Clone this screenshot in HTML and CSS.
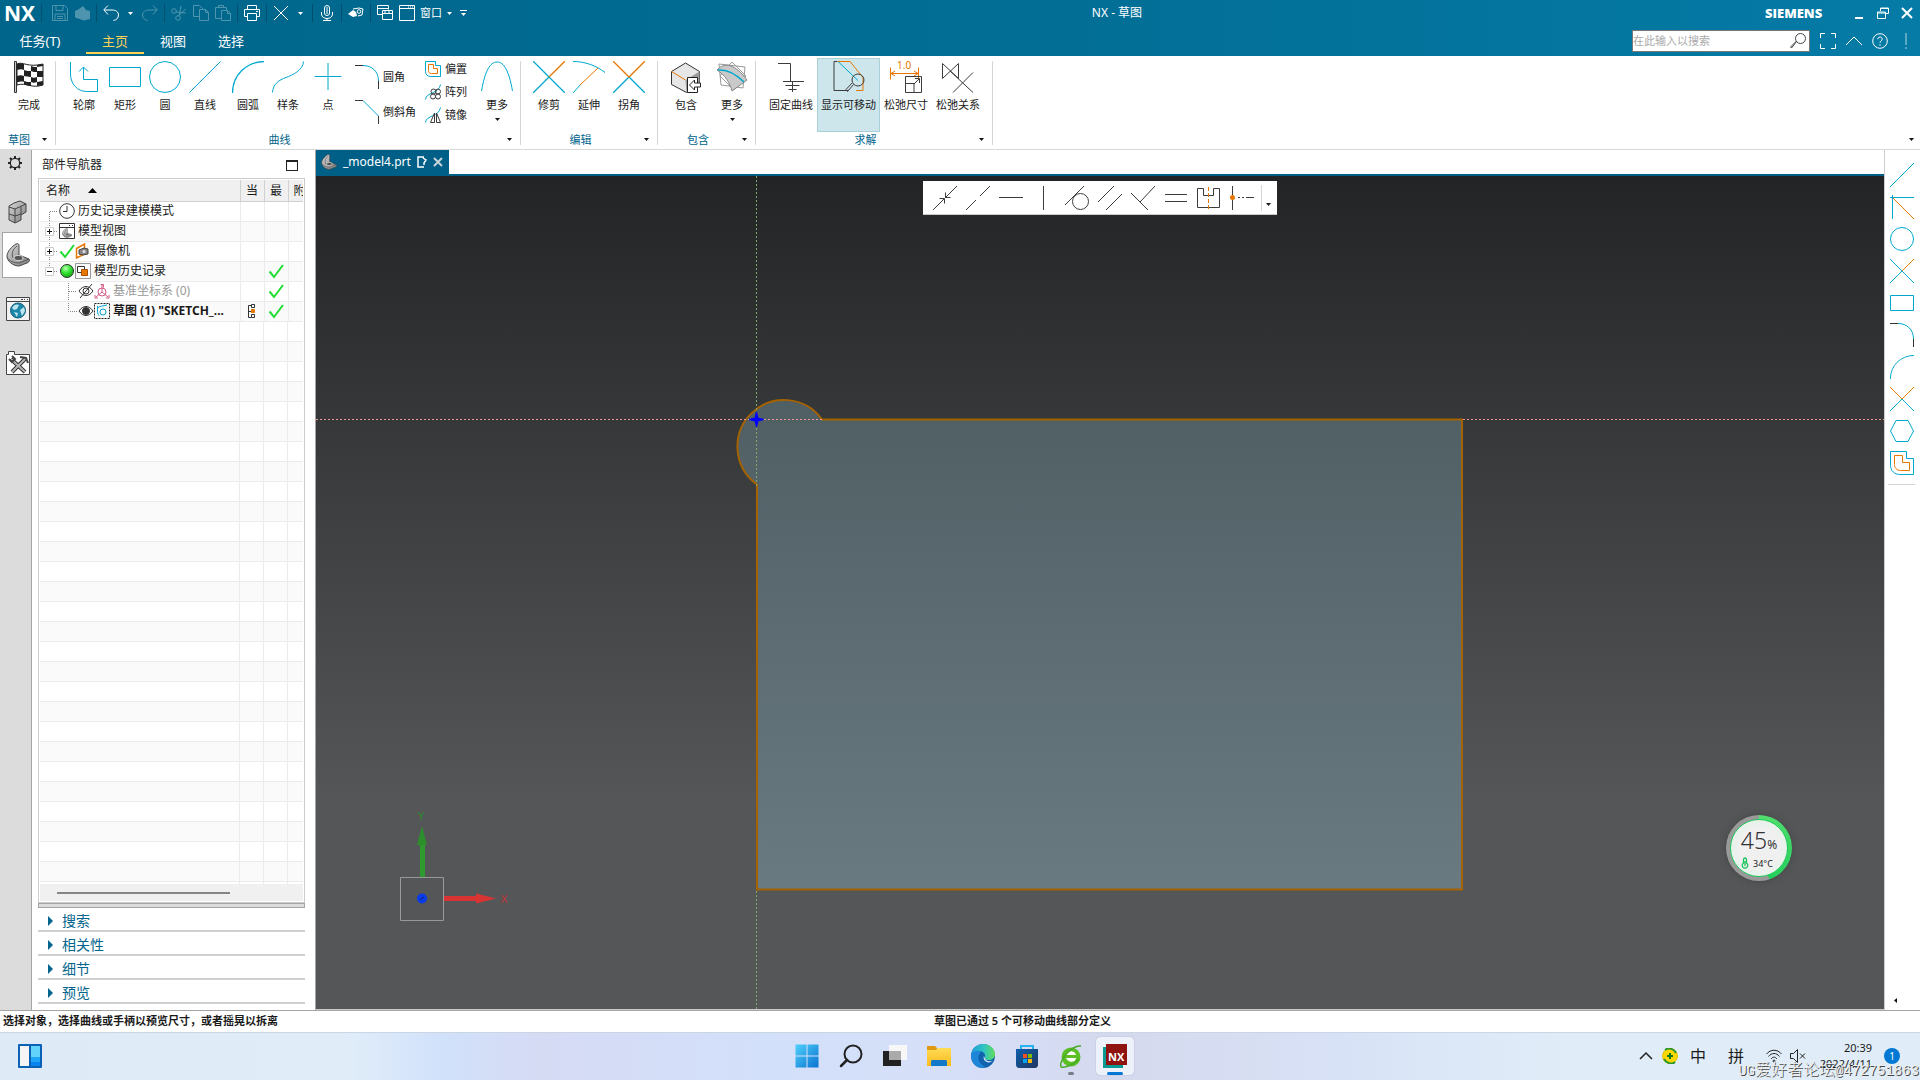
FILE: index.html
```html
<!DOCTYPE html>
<html lang="zh-CN">
<head>
<meta charset="utf-8">
<title>NX - 草图</title>
<link rel="stylesheet" href="styles.css">
</head>
<body>
<svg class="sprite" aria-hidden="true">
  <defs>
    <linearGradient id="metal" x1="0" y1="0" x2="1" y2="1"><stop offset="0" stop-color="#d8d8d8"/><stop offset="1" stop-color="#7c7c7c"/></linearGradient>
    <linearGradient id="face" x1="0" y1="0" x2="0" y2="1"><stop offset="0" stop-color="#505f64"/><stop offset="1" stop-color="#697a81"/></linearGradient>
    <radialGradient id="ball" cx=".4" cy=".3" r=".7"><stop offset="0" stop-color="#b8ffb0"/><stop offset=".5" stop-color="#35e635"/><stop offset="1" stop-color="#14a814"/></radialGradient>
    <linearGradient id="win" x1="0" y1="0" x2="1" y2="1"><stop offset="0" stop-color="#4fd0fb"/><stop offset="1" stop-color="#0a72d0"/></linearGradient>
    <linearGradient id="folder" x1="0" y1="0" x2="0" y2="1"><stop offset="0" stop-color="#ffdc55"/><stop offset="1" stop-color="#fbb91f"/></linearGradient>
    <linearGradient id="edge" x1="0" y1="0" x2="1" y2="0"><stop offset="0" stop-color="#1d9bdc"/><stop offset=".55" stop-color="#30c6c0"/><stop offset="1" stop-color="#62dc58"/></linearGradient>
    <linearGradient id="shop" x1="0" y1="0" x2="1" y2="1"><stop offset="0" stop-color="#0c5fae"/><stop offset="1" stop-color="#22365f"/></linearGradient>
  </defs>
  <symbol id="i-caret" viewBox="0 0 5 3"><path d="M0 0h5L2.500 3z" fill="currentColor"/></symbol>
  <symbol id="i-tick" viewBox="0 0 16 16"><path d="M1.500 8.500l4.500 5.500 9-12" fill="none" stroke="#1fdd32" stroke-width="2"/></symbol>
  <symbol id="i-part" viewBox="0 0 24 24"><path d="M1 13c0-4 5-10 9-12 2-1 3 0 3 2v9l10 4c1 2 0 3-2 4l-8 3c-5 0-12-4-12-10z" fill="url(#metal)" stroke="#4a4a4a"/><path d="M11 3c-4 3-6 7-4 12M1 14c2 4 7 6 12 6l10-4" fill="none" stroke="#5a5a5a"/><ellipse cx="12.500" cy="15" rx="4.500" ry="2.500" fill="#555" stroke="#ddd"/></symbol>
  <symbol id="i-offset" viewBox="0 0 24 24" fill="none"><path d="M.5.5h16v7h7v16h-14c-5 0-9-4-9-9z" stroke="#00a8d0"/><path d="M4.500 4.500h8v7h7v8h-9c-4 0-6-3-6-6z" stroke="#e87700"/></symbol>
  <symbol id="i-offset-s" viewBox="0 0 16 16" fill="none"><path d="M.5.5h10v4h5v11h-10c-3 0-5-2-5-5z" stroke="#00a8d0"/><path d="M3.500 3.500h5v4h4v5h-6c-2 0-3-1-3-3z" stroke="#e87700"/></symbol>
  <symbol id="i-trim" viewBox="0 0 32 32" fill="none" stroke="#00a8d0" stroke-width="1.300"><path d="M0 0l32 32M0 32l16-16"/><path d="M16 16L32 0" stroke="#e87700"/></symbol>
  <symbol id="i-corner" viewBox="0 0 32 32" fill="none" stroke="#00a8d0" stroke-width="1.300"><path d="M0 32l16-16 16 16"/><path d="M0 0l16 16L32 0" stroke="#e87700"/></symbol>
  <symbol id="i-arc" viewBox="0 0 32 32" fill="none" stroke="#00a8d0" stroke-width="1.300"><path d="M.5 32C.5 14 14 1 32 .5"/></symbol>
  <symbol id="i-fillet" viewBox="0 0 24 24" fill="none"><path d="M8 .5c9 0 15.500 6 15.500 15.500" stroke="#00a8d0"/><path d="M0 .5h8M23.500 16v8" stroke="#333"/></symbol>
</svg>

<div class="app">
  <header class="titlebar">
    <div class="title-row">
      <span class="logo">NX</span>
      <div class="quick">
        <i class="vsep"></i>
        <button class="qb dim" aria-label="保存"><svg viewBox="0 0 16 16"><path d="M.5.5h12l3 3v12H.5zM4 .5v5h7v-5M3 15.500V9h10v6.500M5 11.500h6M5 13.500h6"/></svg></button>
        <button class="qb dim" aria-label="零件"><svg viewBox="0 0 16 16"><path class="fill" d="M1 6l4-2 4-3 3 4 4 1v8l-6 1.500-9-3z"/></svg></button>
        <i class="vsep"></i>
        <button class="qb" aria-label="撤销"><svg viewBox="0 0 16 16"><path d="M5 .5L.8 4.800 5 9.500M1 5h8c4 0 6.500 2 6.500 5s-2 5-5 5.500"/></svg></button>
        <button class="drop" aria-label="撤销列表"><svg class="caret"><use href="#i-caret"/></svg></button>
        <button class="qb dim" aria-label="重做"><svg viewBox="0 0 16 16"><path d="M11 .5l4.200 4.300L11 9.500M15 5H7C3 5 .5 7 .5 10s2 5 5 5.500"/></svg></button>
        <i class="vsep"></i>
        <button class="qb dim" aria-label="剪切"><svg viewBox="0 0 16 16"><circle cx="3" cy="6" r="2.300"/><circle cx="7" cy="13" r="2.300"/><path d="M5 7l10 1M8 11L10 1M8.500 10l6-6"/></svg></button>
        <button class="qb dim" aria-label="复制"><svg viewBox="0 0 16 16"><path d="M6 11.500H.5V.5h6l3 3V5M6.500 4.500h6l3 3v8h-9zM12.500 4.500v3h3"/></svg></button>
        <button class="qb dim" aria-label="粘贴"><svg viewBox="0 0 16 16"><path d="M6 13.500H.5v-11h11V5M3.500 2.500v-2h5v2M6.500 5.500h6l3 3v7h-9zM12.500 5.500v3h3"/></svg></button>
        <i class="vsep"></i>
        <button class="qb" aria-label="打印"><svg viewBox="0 0 16 16"><path d="M3.500 4.500v-4h9v4M3 11.500H.5v-7h15v7H13M3.500 8.500h9v7h-9zM12 6.500h2"/></svg></button>
        <i class="vsep"></i>
        <button class="qb" aria-label="删除"><svg viewBox="0 0 16 16"><path d="M1 1l14 14M15 1L1 15"/></svg></button>
        <button class="drop" aria-label="删除列表"><svg class="caret"><use href="#i-caret"/></svg></button>
        <i class="vsep"></i>
        <button class="qb" aria-label="语音"><svg viewBox="0 0 16 16"><rect x="5.500" y=".5" width="5" height="10" rx="2.500"/><path d="M8 2v7M2.500 7v2c0 6 11 6 11 0V7M8 13v2.500M4 15.500h8"/></svg></button>
        <i class="vsep"></i>
        <button class="qb" aria-label="触控"><svg viewBox="0 0 16 16"><path class="fill" d="M0 9l5-4 3 2 1 4-4 1z"/><path d="M5 4l6-1 4 1-1 6-4 1"/><circle cx="11" cy="6.500" r="1.800"/></svg></button>
        <i class="vsep"></i>
        <button class="qb" aria-label="切换窗口"><svg viewBox="0 0 16 16"><path d="M5 9.500H.5V.5h11v4M.5 3.500h11M5.500 5.500h10v9h-10zM5.500 8.500h10M8 6v2M12 6v2"/></svg></button>
        <button class="win-btn"><svg viewBox="0 0 16 16"><path d="M.5.5h15v15H.5zM.5 3.500h15M9 2h1M11 2h1M13 2h1"/></svg>窗口<svg class="caret"><use href="#i-caret"/></svg></button>
        <button class="drop" aria-label="自定义"><svg class="more" viewBox="0 0 7 6"><path d="M0 .5h7"/><path class="fill" d="M1 3h5L3.500 6z"/></svg></button>
      </div>
      <h1 class="app-title">NX - 草图</h1>
      <span class="brand">SIEMENS</span>
      <div class="window-buttons">
        <button aria-label="最小化"><svg viewBox="0 0 12 12"><path d="M2 11h8" stroke-width="2"/></svg></button>
        <button aria-label="还原"><svg viewBox="0 0 12 12"><path d="M3.500 4V1h8v5.500H9M3.500 1.500h8M.5 5h8v6.500h-8zM.5 6h8"/></svg></button>
        <button aria-label="关闭"><svg viewBox="0 0 12 12"><path d="M1 1l10 10M11 1L1 11" stroke-width="2"/></svg></button>
      </div>
    </div>
    <div class="menu-row">
      <nav class="menu">
        <button class="file">任务(T)</button>
        <button class="on">主页</button>
        <button>视图</button>
        <button>选择</button>
      </nav>
      <form class="find">
        <input type="text" placeholder="在此输入以搜索" aria-label="搜索命令">
        <button type="button" aria-label="搜索"><svg viewBox="0 0 16 16"><circle cx="10.500" cy="5.500" r="5"/><path d="M6.500 8.500L1.500 15 .5 14l6-6z"/></svg></button>
      </form>
      <div class="help">
        <button aria-label="全屏"><svg viewBox="0 0 16 16"><path d="M.5 5V.5H5M11 .5h4.500V5M.5 11v4.500H5M11 15.500h4.500V11"/></svg></button>
        <button aria-label="折叠"><svg viewBox="0 0 16 16"><path d="M0 12l8-8 8 8"/></svg></button>
        <button aria-label="帮助"><svg viewBox="0 0 16 16"><circle cx="8" cy="8" r="7.300"/><path d="M5.800 6.200c0-3 4.500-2.800 4.400 0 0 1.600-2.200 1.600-2.200 3.600M8 11.200v1.500"/></svg></button>
        <button class="alert" aria-label="提示"><svg viewBox="0 0 16 16"><path d="M8 0v12M8 14v2" stroke-width="2"/></svg></button>
      </div>
    </div>
  </header>

  <div class="ribbon">
    <section class="group">
      <div class="tools start">
        <button class="tool"><svg viewBox="0 0 32 32"><path d="M1.500.5h2v31h-2z" fill="#ccc" stroke="#333"/><path d="M4 3c6-3 10 4 26 0v21c-12 4-16-3-26 0z" fill="#fff" stroke="#222"/><path d="M4 3c3-1 5-1 7 0v6c-2-1-4-1-7 0zM18 5c2 1 4 1 6 1v5c-2 0-4 0-6-1zM11 9c2 1 5 1 7 1v6c-3 0-5-1-7-1zM24 10h6v6h-6zM4 15c3-1 5-1 7 0v6c-2-1-4 0-7 0zM18 16c2 1 4 1 6 0v5c-2 1-4 1-6 0zM11 20c2 1 5 1 7 1v4c-3 0-5-1-7-2zM24 21l6-1v4l-6 1zM24 4l6-1v2l-6 1z" fill="#222"/></svg>完成</button>
      </div>
      <footer><span>草图</span><svg class="caret"><use href="#i-caret"/></svg></footer>
    </section>

    <section class="group">
      <div class="tools">
        <button class="tool"><svg viewBox="0 0 32 32" class="cy"><path d="M2.500 1v12c0 10 7 17.500 16 17.500h11v-12h-14V6M11 10.500L15.500 6l4.500 4.500"/></svg>轮廓</button>
        <button class="tool shift"><svg viewBox="0 0 32 32" class="cy"><path d="M.5 6.500h31v19H.5z"/></svg>矩形</button>
        <button class="tool"><svg viewBox="0 0 32 32" class="cy"><circle cx="16" cy="16" r="15.500"/></svg>圆</button>
        <button class="tool"><svg viewBox="0 0 32 32" class="cy"><path d="M.5 31.500l31-31"/></svg>直线</button>
        <button class="tool spaced"><svg viewBox="0 0 32 32"><use href="#i-arc"/></svg>圆弧</button>
        <button class="tool"><svg viewBox="0 0 32 32" class="cy"><path d="M.5 31.500C1 23 7 19 14 16.500S31 9 31.500.5"/></svg>样条</button>
        <button class="tool"><svg viewBox="0 0 32 32" class="cy"><path d="M2.500 15.500h27M16 2v27"/></svg>点</button>
        <div class="stack two">
          <button><svg viewBox="0 0 24 24"><use href="#i-fillet"/></svg>圆角</button>
          <button><svg viewBox="0 0 24 24" class="cy"><path d="M8 .5L23.500 16"/><path class="dk" d="M0 .5h8M23.500 16v8"/></svg>倒斜角</button>
        </div>
        <div class="stack three">
          <button><svg viewBox="0 0 16 16"><use href="#i-offset-s"/></svg>偏置</button>
          <button><svg viewBox="0 0 16 16" class="cy"><path d="M.5 15.500C1 8 14 10 15.500.5"/><g class="dk"><circle cx="8.500" cy="7.500" r="2.500"/><circle cx="13" cy="7.500" r="2.500"/><circle cx="8" cy="12.500" r="2.500"/><circle cx="13" cy="12.500" r="2.500"/></g></svg>阵列</button>
          <button><svg viewBox="0 0 16 16" class="cy"><path d="M.5 15.500C1 8 14 10 15.500.5"/><path class="dk" d="M9.500 6v9.500h-4zM11.500 6v9.500h4z"/></svg>镜像</button>
        </div>
        <button class="tool"><svg viewBox="0 0 32 32" class="cy"><path d="M.5 30C4 10 9 1 16 1s12 9 15.500 29"/></svg>更多<svg class="caret"><use href="#i-caret"/></svg></button>
      </div>
      <footer><span>曲线</span><svg class="caret"><use href="#i-caret"/></svg></footer>
    </section>

    <section class="group edit">
      <div class="tools">
        <button class="tool"><svg viewBox="0 0 32 32"><use href="#i-trim"/></svg>修剪</button>
        <button class="tool"><svg viewBox="0 0 32 32" class="cy"><path d="M0 .5c12 0 23 4 32 11M0 32l8-9"/><path class="or" d="M7 24L25 7"/></svg>延伸</button>
        <button class="tool"><svg viewBox="0 0 32 32"><use href="#i-corner"/></svg>拐角</button>
      </div>
      <footer><span>编辑</span><svg class="caret"><use href="#i-caret"/></svg></footer>
    </section>

    <section class="group include">
      <div class="tools">
        <button class="tool"><svg viewBox="0 0 32 32"><path d="M1.500 10.500l14-8.500 14 8.500v13l-13 8-15-8z" fill="#e6e6e6" stroke="#333"/><path d="M15.500 19l14-8.500v13l-13 8z" fill="#9b9b9b"/><path d="M1.500 10.500l14 8.500" stroke="#e87700"/><path d="M17.500 16.500h10v15h-10z" fill="#fff" stroke="#222"/><path d="M19.500 24l5-5v3h6v4h-6v3z" fill="#fff" stroke="#222"/></svg>包含</button>
        <button class="tool"><svg viewBox="0 0 32 32"><path d="M3 3l26 3-2 21L5 24z" fill="none" stroke="#999"/><path d="M16 1l14 14-12 14L4 15z" fill="none" stroke="#999"/><path d="M1 9C9 0 20 4 31 19L16 30C14 22 9 14 1 9z" fill="#c9c9c9" stroke="#888"/><path d="M2 9c10-1 18 4 26 12" fill="none" stroke="#00a8d0" stroke-width="1.500"/></svg>更多<svg class="caret"><use href="#i-caret"/></svg></button>
      </div>
      <footer><span>包含</span><svg class="caret"><use href="#i-caret"/></svg></footer>
    </section>

    <section class="group solve">
      <div class="tools">
        <button class="tool wide"><svg viewBox="0 0 32 32" class="gy"><path d="M3 2.500h12.500v18M8 20.500h21M10.500 24.500h14M13.500 28.500h8M17.500 20v11"/></svg>固定曲线</button>
        <button class="tool wide pressed"><svg viewBox="0 0 32 32" class="gy"><path d="M4.500.5H1v29h15"/><path class="cy" d="M5 .5l20 19"/><path class="or" d="M5 .5h12l13 16v13h-7"/><circle cx="25" cy="19" r="6"/><path d="M20.500 23.500l-6 7-1.500-2 6-6.500"/></svg>显示可移动</button>
        <button class="tool wide"><svg viewBox="0 0 32 32" class="gy"><path class="or" d="M.5 6.500v12M28.500 6.500v12M1 12.500h27M5 10l-4 2.500L5 15M24 10l4 2.500-4 2.500"/><text x="7" y="8">1.0</text><path d="M15.500 15.500h16v16h-16zM15.500 22.500h8.500v9M24 23l5-5M25 17.500h4.500V22"/></svg>松弛尺寸</button>
        <button class="tool wide"><svg viewBox="0 0 32 32" class="gy"><path d="M.5 17.500v-15l16 15v-15zM11 31.500l20-20M8 10l23 21.500"/></svg>松弛关系</button>
      </div>
      <footer><span>求解</span><svg class="caret"><use href="#i-caret"/></svg></footer>
    </section>
    <button class="ribbon-end" aria-label="功能区选项"><svg class="caret"><use href="#i-caret"/></svg></button>
  </div>

  <main class="work">
    <nav class="rail">
      <button class="gear" aria-label="设置"><svg viewBox="0 0 16 16"><circle cx="8" cy="8" r="4.700" fill="none" stroke="#222" stroke-width="1.300"/><path d="M8 1v2M8 13v2M1 8h2M13 8h2M3 3l1.500 1.500M11.500 11.500L13 13M13 3l-1.500 1.500M3 13l1.500-1.500" stroke="#222" stroke-width="2"/></svg></button>
      <button aria-label="装配导航器"><svg viewBox="0 0 24 24"><path d="M4 6l5-3 6-2 6 3v8l-5 3v5l-6 3-6-3z" fill="url(#metal)" stroke="#444"/><path d="M4 7l6 2 11-5M10 9v14M4 14l6 2 6-2M16 7v7" fill="none" stroke="#444"/></svg></button>
      <button class="current" aria-label="部件导航器"><svg viewBox="0 0 24 24"><use href="#i-part"/></svg></button>
      <button aria-label="浏览器"><svg viewBox="0 0 24 24"><path d="M.5.5h23v23H.5z" fill="#f2f2f2" stroke="#444"/><path d="M.5 4.500h23M15 2.500h2M18 2.500h1M21 2.500h1" stroke="#444"/><circle cx="12" cy="13.500" r="7.500" fill="#1c87a8" stroke="#145f78"/><path d="M6 11c2-4 5-4 7-3l-2 4-3 1zM14 13l4-3 1 4-3 5zM8 15l4 1-1 4z" fill="#bfe5ef"/></svg></button>
      <button aria-label="工具"><svg viewBox="0 0 24 24"><path d="M.5 3.500h2v-3h6v3h15v20H.5z" fill="#fff" stroke="#444"/><path d="M5 8l14 13M19 8L6 21" stroke="#333" stroke-width="4"/><path d="M5 8l14 13M19 8L6 21" stroke="#b5b5b5" stroke-width="2"/><path d="M3 8l3 3 3-3-3-3M14 6l6 1 2 5" fill="none" stroke="#444" stroke-width="2"/></svg></button>
    </nav>

    <aside class="navigator">
      <header><h2>部件导航器</h2><button aria-label="最大化面板"></button></header>
      <div class="tree">
        <table>
          <colgroup><col class="c-name"><col class="c-flag"><col class="c-flag"><col></colgroup>
          <thead><tr><th class="name">名称<svg class="sort" viewBox="0 0 9 5"><path d="M0 5h9L4.500 0z"/></svg></th><th>当</th><th>最</th><th>附</th></tr></thead>
          <tbody>
            <tr><td><div class="node"><svg class="ln" viewBox="0 0 19 20"><path d="M9.500 20V10.500H18"/></svg><svg viewBox="0 0 16 16"><circle cx="8" cy="8" r="7.300" fill="#fff" stroke="#333"/><path d="M8 3v5.500H4" fill="none" stroke="#333"/></svg><span>历史记录建模模式</span></div></td><td></td><td></td><td></td></tr>
            <tr><td><div class="node"><svg class="ln" viewBox="0 0 19 20"><path d="M9.500 0v20M14 10.500h4"/><path class="box" d="M5.500 6.500h8v8h-8z"/><path class="sign" d="M7 10.500h5M9.500 8v5"/></svg><svg viewBox="0 0 16 16"><path d="M.5.500h15v15H.5zM.5 4.500h15M10 2.500h1M13 2.500h1" fill="#fff" stroke="#333"/><use href="#i-part" x="3" y="5" width="10" height="10"/></svg><span>模型视图</span></div></td><td></td><td></td><td></td></tr>
            <tr><td><div class="node"><svg class="ln" viewBox="0 0 19 20"><path d="M9.500 0v20M14 10.500h4"/><path class="box" d="M5.500 6.500h8v8h-8z"/><path class="sign" d="M7 10.500h5M9.500 8v5"/></svg><svg><use href="#i-tick"/></svg><svg viewBox="0 0 16 16"><path d="M1.500 5.500l8-4.500v10l-8 4z" fill="#fff" stroke="#e87700" stroke-width="1.500"/><path d="M4 7l5-2 4 1v5l-5 1-4-1z" fill="#888" stroke="#444"/><circle cx="9" cy="8.500" r="1.500" fill="#ddd"/></svg><span>摄像机</span></div></td><td></td><td></td><td></td></tr>
            <tr><td><div class="node"><svg class="ln" viewBox="0 0 19 20"><path d="M9.500 0v6M14 10.500h4"/><path class="box" d="M5.500 6.500h8v8h-8z"/><path class="sign" d="M7 10.500h5"/></svg><svg viewBox="0 0 16 16"><circle cx="8" cy="8" r="6.500" fill="url(#ball)" stroke="#333"/></svg><svg viewBox="0 0 16 16"><path d="M.5.500h15v15H.5z" fill="none" stroke="#999"/><path d="M2.500 3.500h7v6h-7z" fill="#fff" stroke="#333"/><path d="M6.500 6.500h6v6h-6z" fill="#e87700" stroke="#a85000"/></svg><span>模型历史记录</span></div></td><td></td><td><svg class="ok"><use href="#i-tick"/></svg></td><td></td></tr>
            <tr><td><div class="node muted"><svg class="ln deep" viewBox="0 0 38 20"><path d="M28.500 0v20M29 10.500h8"/></svg><svg viewBox="0 0 16 16" fill="none" stroke="#333"><path d="M1 8c4-6 10-6 14 0-4 6-10 6-14 0zM2 15L14 1"/><circle cx="8" cy="8" r="3"/></svg><svg viewBox="0 0 16 16" fill="none" stroke="#d25a86"><path d="M8 2v7l-6 5M8 9l6 5"/><circle cx="8" cy="9" r="4"/><path d="M6.500 1.500h3v3M1 12v3h3M15 12v3h-3"/></svg><span>基准坐标系 (0)</span></div></td><td></td><td><svg class="ok"><use href="#i-tick"/></svg></td><td></td></tr>
            <tr><td><div class="node strong"><svg class="ln deep" viewBox="0 0 38 20"><path d="M28.500 0v10.500H37"/></svg><svg viewBox="0 0 16 16" fill="none" stroke="#333"><path d="M1 8c4-6 10-6 14 0-4 6-10 6-14 0z"/><circle cx="8" cy="8" r="3.500" fill="#333"/></svg><svg viewBox="0 0 16 16" fill="none" stroke="#00a8d0"><path d="M.5.500h15v15H.5z" stroke="#222" stroke-dasharray="2 1"/><path d="M3.500 3v5c0 3 1 4 2 5M3 5c3-2 6-2 10-3"/><circle cx="9" cy="9" r="3"/></svg><span>草图 (1) "SKETCH_...</span></div></td><td><svg class="ok" viewBox="0 0 16 16" fill="none" stroke="#333"><path d="M7 2.500H4.500v12H7M4.500 8.500H7M7.500 1.500h3v3h-3zM7.500 11.500h3v3h-3z"/><path d="M7.500 6.500h3v3h-3z" fill="#e87700" stroke="#e87700"/></svg></td><td><svg class="ok"><use href="#i-tick"/></svg></td><td></td></tr>
          </tbody>
        </table>
        <div class="rows-fill"><i class="c-name"></i><i class="c-flag"></i><i class="c-flag"></i></div>
        <div class="hscroll"><i></i></div>
      </div>
      <div class="splitter"></div>
      <div class="sections">
        <button>搜索</button>
        <button>相关性</button>
        <button>细节</button>
        <button>预览</button>
      </div>
    </aside>

    <section class="view">
      <div class="tabs">
        <div class="tab"><svg class="t-part"><use href="#i-part"/></svg><span>_model4.prt</span>
          <svg class="t-edit" viewBox="0 0 10 12"><path d="M7 1H1v10h6M7 9V7l2-3-3-2" fill="none" stroke="#fff" stroke-width="1.500"/></svg>
          <button aria-label="关闭标签"><svg viewBox="0 0 10 10"><path d="M1 1l8 8M9 1L1 9" stroke="#c5d3da" stroke-width="2"/></svg></button></div>
      </div>
      <div class="canvas">
        <svg class="sketch" aria-label="草图">
          <path d="M441 308.500V713.500H1146V243.500H506A46.600 46.600 0 1 0 441 308.500z" fill="url(#face)" stroke="#a46300" stroke-width="2"/>
          <path d="M440.500 220v90" stroke="#7fa86a" stroke-dasharray="2 2"/>
          <line x1="0" y1="243.500" x2="506" y2="243.500" stroke="#f09a8e" stroke-dasharray="2 2"/>
          <line x1="1147" y1="243.500" x2="100%" y2="243.500" stroke="#f09a8e" stroke-dasharray="2 2"/>
          <line x1="440.500" y1="0" x2="440.500" y2="220" stroke="#7fa86a" stroke-dasharray="2 2"/>
          <line x1="440.500" y1="715" x2="440.500" y2="100%" stroke="#7fa86a" stroke-dasharray="2 2"/>
          <path d="M440.500 236l1.500 6 6 1.500-6 1.500-1.500 6-1.500-6-6-1.500 6-1.500z" fill="#00f" stroke="#00f"/>
          <g>
            <path d="M84.500 701.500h43v43h-43z" fill="none" stroke="#999"/>
            <path d="M104 669h5v32h-5z" fill="#2f9a2f"/><path d="M101 669h10l-5-19z" fill="#2c8f2c"/>
            <path d="M128 720h33v5h-33z" fill="#d83434"/><path d="M160 717.500v10l20-5z" fill="#d83434"/>
            <circle cx="106" cy="722.500" r="5" fill="#0a3bea"/><path d="M104 724l4-3" stroke="#061c6e"/>
            <text x="102" y="644" fill="#2c8a2c">Y</text><text x="185" y="727" fill="#c83232">X</text>
          </g>
        </svg>
        <div class="constraints">
          <button aria-label="重合"><svg viewBox="0 0 24 24"><path d="M0 24l11-11M24 0L12 12M6.500 12.500h5v5M17.500 11.500h-5v-5"/></svg></button>
          <button aria-label="共线"><svg viewBox="0 0 24 24"><path d="M0 24l10-10M14 10L24 0"/></svg></button>
          <button aria-label="水平"><svg viewBox="0 0 24 24"><path d="M0 11.500h24"/></svg></button>
          <button aria-label="竖直"><svg viewBox="0 0 24 24"><path d="M11.500 0v24"/></svg></button>
          <button aria-label="相切"><svg viewBox="0 0 24 24"><circle cx="15.500" cy="15.500" r="8"/><path d="M0 19L19 0"/></svg></button>
          <button aria-label="平行"><svg viewBox="0 0 24 24"><path d="M0 16L16 0M8 24L24 8"/></svg></button>
          <button aria-label="垂直"><svg viewBox="0 0 24 24"><path d="M0 7l17 17M9 16L24 0"/></svg></button>
          <button aria-label="等长"><svg viewBox="0 0 24 24"><path d="M1 8.500h22M1 15.500h22"/></svg></button>
          <button aria-label="对称"><svg viewBox="0 0 24 24"><path d="M.5 2.500h6v7h10v-7h6v19H.5z"/><path class="or" d="M11.500 1v23" stroke-dasharray="4 2"/></svg></button>
          <button aria-label="中点对齐"><svg viewBox="0 0 24 24"><path d="M2.500 0v24M8 11.500h2M12 11.500h2M16 11.500h8"/><circle cx="2.500" cy="11.500" r="2.500" fill="#e87700" stroke="none"/></svg></button>
          <i></i>
          <button class="opt" aria-label="更多约束"><svg class="caret"><use href="#i-caret"/></svg></button>
        </div>
        <div class="gauge"><div class="dial">
          <p class="load">45<small>%</small></p>
          <p class="temp"><svg viewBox="0 0 8 12"><path d="M2.500 6V2.500a1.500 1.500 0 0 1 3 0V6a2.800 2.800 0 1 1-3 0zM4 4v5" fill="none" stroke="#19c35a" stroke-width="1.300"/></svg>34°C</p>
        </div></div>
      </div>
    </section>

    <aside class="side-tools">
      <button aria-label="直线"><svg viewBox="0 0 24 24" class="cy"><path d="M0 24L24 0"/></svg></button>
      <button aria-label="拐角线"><svg viewBox="0 0 24 24" class="cy"><path d="M0 2.500h24M2.500 0v24"/><path class="or" d="M3 3l21 21"/></svg></button>
      <button aria-label="圆"><svg viewBox="0 0 24 24" class="cy"><circle cx="12" cy="12" r="11.500"/></svg></button>
      <button aria-label="修剪"><svg><use href="#i-trim"/></svg></button>
      <button aria-label="矩形"><svg viewBox="0 0 24 24" class="cy"><path d="M.5 4.500h23v15H.5z"/></svg></button>
      <button aria-label="圆角"><svg><use href="#i-fillet"/></svg></button>
      <button aria-label="圆弧"><svg><use href="#i-arc"/></svg></button>
      <button aria-label="制作拐角"><svg><use href="#i-corner"/></svg></button>
      <button aria-label="多边形"><svg viewBox="0 0 24 24" class="cy"><path d="M6 1.500h12L23.500 12 18 22.500H6L.5 12z"/></svg></button>
      <button aria-label="偏置"><svg><use href="#i-offset"/></svg></button>
      <hr>
      <button class="fold" aria-label="展开"><svg viewBox="0 0 3 5"><path d="M3 0v5L0 2.500z" fill="#111"/></svg></button>
    </aside>
  </main>

  <footer class="status"><span class="cue">选择对象，选择曲线或手柄以预览尺寸，或者摇晃以拆离</span><span class="state">草图已通过 5 个可移动曲线部分定义</span></footer>

  <div class="taskbar">
    <div class="tb-left"><button aria-label="小组件"><svg viewBox="0 0 24 24"><rect width="24" height="24" rx="1" fill="#0b62b5"/><path d="M2 2h9v20H2z" fill="#f5f5f5"/><path d="M13 2h9v11h-9z" fill="#62d4fb"/><path d="M13 13h9v5h-9z" fill="#1fa5f5"/><path d="M13 18h9v4h-9z" fill="#0a84ec"/></svg></button></div>
    <div class="tb-apps">
      <button aria-label="开始"><svg viewBox="0 0 24 24"><path d="M.5.500h11v11H.5zM12.500.500h11v11h-11zM.5 12.500h11v11H.5zM12.500 12.500h11v11h-11z" fill="url(#win)"/></svg></button>
      <button aria-label="搜索"><svg viewBox="0 0 24 24"><circle cx="14" cy="10" r="8.500" fill="none" stroke="#222" stroke-width="2"/><path d="M8 16l-6 6" stroke="#222" stroke-width="2.500" stroke-linecap="round"/></svg></button>
      <button aria-label="任务视图"><svg viewBox="0 0 24 24"><path d="M6 1h18v15H6z" fill="#f7f7f7"/><path d="M0 7h18v15H0z" fill="#222"/><path d="M6 7h12v9H6z" fill="#aaa"/></svg></button>
      <button aria-label="文件资源管理器"><svg viewBox="0 0 24 24"><path d="M0 3c0-1 0-1 1-1h7l2 2v4H0z" fill="#e09a12"/><path d="M0 6h9l2-2h13v18H0z" fill="url(#folder)"/><path d="M4 22v-4c0-2 1-2 2-2h12c1 0 2 0 2 2v4z" fill="#1279c9"/></svg></button>
      <button aria-label="Edge"><svg viewBox="0 0 24 24"><circle cx="12" cy="12" r="12" fill="#1263ad"/><path d="M0 11C1 4 6 0 12 0c7 0 12 5 12 10 0 4-3 6-6 6-4 0-5-1-4-3 1-3-2-6-6-6-4 0-7 2-8 4z" fill="url(#edge)"/><path d="M0 11c3-5 8-5 10-3-4 3-3 9 0 12l4 3c-8 3-14-4-14-12z" fill="#1e86d8"/><path d="M13 12c1 5 5 6 9 5-2 1-4 2-6 1-3-1-4-4-3-6z" fill="#dce3f5"/></svg></button>
      <button aria-label="应用商店"><svg viewBox="0 0 24 24"><path d="M6 6V2h12v4" fill="none" stroke="#27b3f0" stroke-width="2"/><path d="M1 5h22v15c0 3-1 4-4 4H5c-3 0-4-1-4-4z" fill="url(#shop)"/><path d="M8 10h4v4H8z" fill="#f25022"/><path d="M13 10h4v4h-4z" fill="#7fba00"/><path d="M8 15h4v4H8z" fill="#00a4ef"/><path d="M13 15h4v4h-4z" fill="#ffb900"/></svg></button>
      <button class="running" aria-label="浏览器"><svg viewBox="0 0 24 24"><circle cx="12" cy="13" r="9.500" fill="#5cc024"/><path d="M7 11c1-5 9-5 10 0zM7 14h10c0 4-7 6-10 0z" fill="#fff"/><path d="M2 23C0 17 12 1 22 2M2 23c4 1 14-3 18-8" fill="none" stroke="#49a82a" stroke-width="1.500"/></svg></button>
      <button class="active" aria-label="NX"><svg viewBox="0 0 24 24"><path d="M0 3h20v21H0z" fill="#0a9a94"/><path d="M3 0h21v21H3z" fill="#8f140f"/><text x="5" y="17">NX</text></svg></button>
    </div>
    <div class="tray">
      <button aria-label="显示隐藏图标"><svg viewBox="0 0 16 16"><path d="M2 11l6-6 6 6" stroke-width="1.500"/></svg></button>
      <button aria-label="安全"><svg viewBox="0 0 16 16"><circle cx="8" cy="8" r="7.500" fill="#ffd800" stroke="#e2c000"/><path d="M3 2c4-3 9-1 11 3M2 11c2 4 8 6 11 3" stroke="#2d962d" stroke-width="2"/><path d="M8 5v6M5 8h6" stroke="#137a1c" stroke-width="2"/></svg></button>
      <button class="ime">中</button>
      <button class="ime pin">拼</button>
      <button aria-label="网络"><svg viewBox="0 0 16 16"><path d="M.5 6c4-5 11-5 15 0M2.500 8.500c3-4 8-4 11 0M5 11c2-2.500 4-2.500 6 0"/><circle cx="8" cy="13" r="1"/></svg></button>
      <button aria-label="静音"><svg viewBox="0 0 16 16"><path d="M.5 5.500h3l4-4v13l-4-4h-3zM10 5.500l5 5M15 5.500l-5 5"/></svg></button>
      <time><span>20:39</span><span>2022/4/11</span></time>
      <button class="badge">1</button>
    </div>
    <p class="mark"><b>UG</b>爱好者论坛<b>@472751863</b></p>
  </div>
</div>
</body>
</html>
```
FILE: styles.css
```css
* { box-sizing: border-box; }
body {
  margin: 0;
  font-family: "Noto Sans", "Noto Sans CJK SC", sans-serif;
  font-size: 12px;
  line-height: 16px;
  color: #1a1a1a;
  background: #fff;
}
button {
  display: flex;
  align-items: center;
  margin: 0;
  padding: 0;
  border: 0;
  background: none;
  color: inherit;
  font: inherit;
  white-space: nowrap;
}
svg { display: block; flex: none; }
h1, h2, p { margin: 0; font-size: 12px; font-weight: 400; }
.sprite { position: absolute; width: 0; height: 0; }
.caret { width: 5px; height: 3px; }
.cy { fill: none; stroke: #00a8d0; }
.gy { fill: none; stroke: #3c3c3c; }
.dk { stroke: #3c3c3c; }
.or { stroke: #e87700; }

.app { display: flex; flex-direction: column; min-height: 100vh; }

/* Title bar */
.titlebar {
  height: 56px;
  color: #fff;
  background: linear-gradient(90deg, #00658a, #026e96 55%, #057ba6);
}
.titlebar svg { fill: none; stroke: #fff; }
.titlebar .fill { fill: #fff; stroke: none; }
.title-row { display: flex; align-items: center; height: 26px; padding: 0 7px 0 4px; }
.logo { width: 37px; font: 700 21px/26px "Noto Sans", sans-serif; }
.quick { display: flex; align-items: center; gap: 6px; }
.vsep { width: 1px; height: 18px; background: #004f6e; }
.vsep:first-child { margin-right: 4px; }
.qb svg, .win-btn svg:first-child { width: 16px; height: 16px; }
.dim { opacity: .3; }
.drop { width: 11px; justify-content: center; }
.titlebar .caret { fill: #fff; stroke: none; }
.win-btn { gap: 5px; font-size: 11px; }
.more { width: 7px; height: 6px; }
.app-title { flex: 1; text-align: center; }
.brand { width: 88px; font: 800 13px/16px "Open Sans", sans-serif; }
.window-buttons { display: flex; gap: 12px; }
.window-buttons svg { width: 12px; height: 12px; }
.menu-row { display: flex; align-items: center; height: 30px; padding-right: 6px; }
.menu { display: flex; flex: 1; height: 28px; margin-bottom: 2px; font-size: 13px; }
.menu button { width: 58px; padding-top: 3px; justify-content: center; border-bottom: 2px solid transparent; }
.menu .file { width: 86px; padding-right: 6px; }
.menu .on { color: #ffd257; border-color: #ffcf4d; }
.find {
  display: flex;
  align-items: center;
  width: 178px;
  height: 22px;
  padding-right: 3px;
  border: 1px solid #777;
  background: #fff;
}
.find input { flex: 1; min-width: 0; padding: 0; border: 0; outline: 0; font: 11px/16px "Noto Sans", "Noto Sans CJK SC", sans-serif; }
.find input::placeholder { color: #aaa; }
.find svg { width: 16px; height: 16px; stroke: #444; }
.help { display: flex; gap: 10px; padding-left: 10px; }
.help svg { width: 16px; height: 16px; }
.help .alert { opacity: .35; }

/* Ribbon */
.ribbon { display: flex; height: 94px; border-bottom: 1px solid #d9d9d9; font-size: 11px; }
.group { display: flex; flex-direction: column; padding: 2px 0; position: relative; }
.group::after { content: ""; position: absolute; right: 0; top: 5px; bottom: 4px; width: 1px; background: #d5d5d5; }
.tools { display: flex; flex: 1; padding: 0 4px 0 8px; }
.tools.start { padding: 0 7px 0 9px; }
.edit .tools { padding-right: 9px; }
.solve .tools { padding: 0 9px; }
.include .tools { gap: 6px; }
.tool { flex-direction: column; width: 40px; height: 74px; padding-top: 2px; border: 1px solid transparent; line-height: 14px; }
.tool > svg:first-child { width: 32px; height: 32px; margin-bottom: 5px; overflow: visible; }
.tool .caret { margin-top: 6px; }
.tool text { font: 10px "Noto Sans", sans-serif; fill: #e87700; stroke: none; }
.tool.shift { margin-left: 1px; }
.tool.spaced { margin-left: 3px; }
.tool.wide { width: auto; padding: 2px 3px 0; }
.tool.pressed { background: #cde6eb; border-color: #a8d0d9; }
.stack { display: flex; flex-direction: column; }
.stack button { gap: 4px; }
.two { gap: 11px; padding: 7px 9px 0 7px; }
.two svg { width: 24px; height: 24px; }
.three { gap: 7px; padding: 3px 10px 0 0; }
.three svg { width: 16px; height: 16px; }
.group footer { display: flex; align-items: center; height: 15px; padding-right: 9px; color: #00648c; }
.group footer span { flex: 1; padding-right: 4px; text-align: center; line-height: 14px; }
.group footer .caret, .ribbon-end { color: #111; }
.ribbon-end { align-self: flex-end; margin: 0 6px 8px auto; }

/* Work area */
.work { display: flex; flex: 1; }
.rail { display: flex; flex-direction: column; width: 32px; background: #dcdcdc; border-right: 1px solid #a5a5a5; }
.rail button { justify-content: center; height: 46px; padding-left: 4px; margin-bottom: 8px; }
.rail .gear { height: 26px; margin-bottom: 13px; padding: 0 2px 0 0; }
.rail svg { width: 24px; height: 24px; }
.rail .gear svg { width: 16px; height: 16px; }
.rail button:nth-child(2) { padding-left: 2px; margin-bottom: -3px; }
.rail .current { margin: 0 -1px 8px 2px; padding: 0; background: #fff; border: 1px solid #a5a5a5; border-right: 0; }
.navigator { display: flex; flex-direction: column; width: 284px; padding: 0 10px 6px 6px; border-right: 1px solid #a5a5a5; }
.navigator header { display: flex; align-items: center; justify-content: space-between; height: 28px; padding: 2px 7px 0 4px; }
.navigator header button { width: 12px; height: 11px; border: 1px solid #222; border-top-width: 2px; }
.tree { display: flex; flex: 1; flex-direction: column; padding: 1px; border: 1px solid #ccc; overflow: hidden; }
.tree table { width: 100%; table-layout: fixed; border-collapse: collapse; }
.c-name { width: 200px; }
.c-flag { width: 24px; }
.tree th { height: 21px; padding: 2px 0 0; background: #f0f0f0; border: solid #d0d0d0; border-width: 0 1px 1px 0; font-weight: 400; line-height: 16px; overflow: hidden; }
.tree th.name { padding-left: 6px; text-align: left; }
.tree th:last-child { padding-left: 5px; border-right: 0; }
.sort { display: inline-block; width: 9px; height: 5px; margin: 0 0 2px 18px; }
.tree td { height: 20px; padding: 0; border: solid #ebebeb; border-width: 0 1px 1px 0; overflow: hidden; }
.tree td:last-child { border-right: 0; }
.tree tbody tr:nth-child(even) { background: #fafafa; }
.node { display: flex; align-items: center; height: 19px; }
.node svg { width: 16px; height: 16px; }
.node .ln { width: 19px; height: 20px; fill: none; stroke: #888; stroke-dasharray: 1 1; }
.node .deep { width: 38px; }
.ln .box { fill: #fff; stroke: #ccc; stroke-dasharray: none; }
.ln .sign { stroke: #111; stroke-dasharray: none; }
.node span { padding-left: 3px; white-space: nowrap; }
.muted span { color: #999; }
.strong span { font-weight: 700; }
.ok { width: 16px; height: 16px; margin: 0 auto; }
.rows-fill {
  display: flex;
  flex: 1;
  background: repeating-linear-gradient(#fff 0 19px, #ebebeb 19px 20px, #fafafa 20px 39px, #ebebeb 39px 40px);
}
.rows-fill i { border-right: 1px solid #ebebeb; }
.hscroll { display: flex; align-items: center; height: 17px; padding-left: 17px; background: #f0f0f0; }
.hscroll i { width: 173px; height: 2px; background: #858585; }
.splitter { height: 5px; background: #dcdcdc; border: 1px solid #a5a5a5; }
.sections { display: flex; flex-direction: column; }
.sections button { height: 24px; padding: 4px 0 0 10px; border-bottom: 2px solid #d0d0d0; color: #00648c; font-size: 14px; }
.sections button::before { content: ""; margin: 0 9px 0 0; border: solid transparent; border-width: 5px 0 5px 5px; border-left-color: #00648c; }

.view { display: flex; flex: 1; flex-direction: column; min-width: 0; }
.tabs { display: flex; height: 26px; border-bottom: 2px solid #005f87; }
.tab { display: flex; align-items: center; gap: 6px; padding: 0 6px 0 5px; background: #005f87; color: #fff; font-size: 12px; }
.t-part { width: 16px; height: 16px; }
.t-edit { width: 10px; height: 12px; }
.tab button svg { width: 10px; height: 10px; }
.canvas { position: relative; flex: 1; background: linear-gradient(#232425, #555658 75%); border-bottom: 1px solid #ccc; overflow: hidden; }
.sketch { position: absolute; left: 0; top: 0; width: 100%; height: 100%; }
.sketch text { font: 11px "Noto Sans", sans-serif; }
.constraints {
  position: absolute;
  left: 607px;
  top: 5px;
  display: flex;
  align-items: center;
  gap: 9px;
  height: 34px;
  padding: 0 6px 0 10px;
  background: #fff;
  border-bottom: 1px solid #ccc;
}
.constraints svg { width: 24px; height: 24px; fill: none; stroke: #3c3c3c; }
.constraints .or { stroke: #e87700; }
.constraints i { width: 1px; height: 26px; margin: 0 -5px 0 -2px; background: #d5d5d5; }
.constraints .opt svg { width: 5px; height: 3px; margin-top: 14px; stroke: none; }
.gauge {
  position: absolute;
  right: 92px;
  bottom: 128px;
  width: 66px;
  height: 66px;
  padding: 4px;
  border-radius: 50%;
  background: conic-gradient(#55e06f, #22cf5b 45%, #999 45%);
  box-shadow: 0 0 6px #444;
}
.dial { height: 100%; padding-top: 8px; border: 1px solid #1fc95c; border-radius: 50%; background: radial-gradient(#f0f0f0 50%, #d9f5e0); text-align: center; }
.load { font-size: 23px; font-weight: 300; line-height: 24px; color: #333; }
.load small { font-size: 12px; font-weight: 400; }
.temp { display: flex; justify-content: center; gap: 4px; padding-right: 4px; font-size: 9px; line-height: 14px; }
.temp svg { width: 8px; height: 12px; }

.side-tools { display: flex; flex-direction: column; align-items: center; gap: 8px; width: 36px; padding: 13px 2px 7px 0; border-left: 1px solid #ccc; }
.side-tools svg { width: 24px; height: 24px; }
.side-tools hr { width: 27px; height: 1px; margin: 1px 0 0; border: 0; background: #d5d5d5; }
.side-tools .fold { margin: auto 12px 0 0; }
.side-tools .fold svg { width: 3px; height: 5px; }

/* Status line and taskbar */
.status { display: flex; height: 22px; padding-left: 3px; border-top: 1px solid #a5a5a5; font-size: 11px; font-weight: 600; line-height: 20px; }
.cue { width: 931px; }
.taskbar {
  position: relative;
  display: grid;
  grid-template-columns: 1fr auto 1fr;
  align-items: center;
  height: 48px;
  padding-bottom: 2px;
  border-top: 1px solid #ccd5e6;
  background: linear-gradient(90deg, #deebf7, #e0edf9 18%, #d1e1fa 23%, #d6dbf4 28%, #d3e0fa 40%, #d6dff8 50%, #d5d9ee 58%, #d8e2f6 70%, #e0edf8 82%, #e0edf8);
}
.taskbar svg { width: 24px; height: 24px; }
.tb-left { padding-left: 18px; }
.tb-apps { display: flex; gap: 6px; padding-left: 2px; }
.tb-apps button { position: relative; width: 38px; height: 38px; justify-content: center; border-radius: 4px; }
.tb-apps .active { background: #edf1fa; box-shadow: 0 0 1px #889; }
.tb-apps .running::after, .tb-apps .active::after { content: ""; position: absolute; bottom: 0; width: 6px; height: 3px; border-radius: 2px; background: #777c88; }
.tb-apps .active::after { width: 16px; background: #0078d4; }
.tb-apps text { font: 700 11px "Open Sans", sans-serif; fill: #fff; }
.tray { display: flex; align-items: center; justify-content: flex-end; gap: 8px; padding-right: 20px; }
.tray svg { width: 16px; height: 16px; fill: none; stroke: #222; }
.ime { font-size: 16px; padding-left: 4px; }
.ime.pin { padding: 0 14px; }
.tray time { display: flex; flex-direction: column; align-items: flex-end; width: 58px; font-size: 11px; line-height: 16px; }
.tray .badge { width: 16px; height: 16px; margin-left: 4px; justify-content: center; border-radius: 50%; background: #0078d4; color: #fff; font-size: 10px; }
.mark { position: absolute; right: 1px; bottom: 0; font-family: "Noto Sans CJK SC", sans-serif; font-size: 16px; font-weight: 300; line-height: 24px; color: #eee; text-shadow: 1px 1px 0 #444; white-space: nowrap; }
.mark b { font: 400 14px "Liberation Mono", monospace; }
```
